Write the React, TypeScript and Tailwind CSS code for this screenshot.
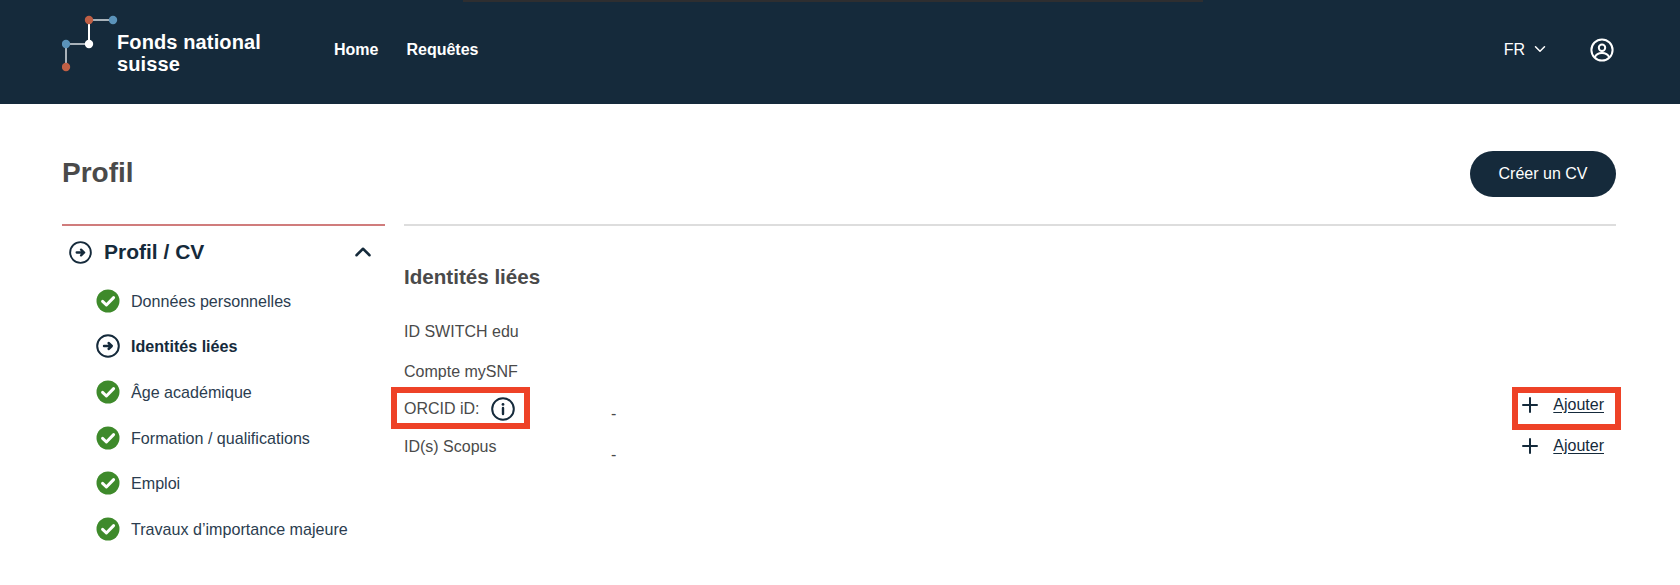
import { ChevronDown, ChevronUp, Plus } from "lucide-react"

const navy = "#152a3b"

const ArrowCircle = ({ size }: { size: number }) => (
  <svg width={size} height={size} viewBox="0 0 24 24" fill="none" stroke={navy} className="shrink-0">
    <circle cx="12" cy="12" r="10.8" strokeWidth="2" />
    <path d="M8 12h7.5M12.6 9l3.2 3-3.2 3" strokeWidth="2.4" strokeLinecap="round" strokeLinejoin="round" />
  </svg>
)

const CheckCircle = () => (
  <svg width="24" height="24" viewBox="0 0 24 24" className="shrink-0">
    <circle cx="12" cy="12" r="11.5" fill="#3e8a2b" />
    <path d="M6.6 12.4 10.4 16 17.6 8.6" fill="none" stroke="#fff" strokeWidth="3" strokeLinecap="round" strokeLinejoin="round" />
  </svg>
)

const Logo = () => (
  <svg width="64" height="64" viewBox="0 0 64 64" className="shrink-0">
    <path d="M27 10h24" stroke="#a9b2b9" strokeWidth="2" />
    <path d="M27 10v24" stroke="#fff" strokeWidth="2" />
    <path d="M4 34h23" stroke="#a9b2b9" strokeWidth="2" />
    <path d="M4 34v23" stroke="#a9b2b9" strokeWidth="2" />
    <circle cx="27" cy="10" r="4.2" fill="#bf5f45" />
    <circle cx="51" cy="10" r="4.2" fill="#5b93ba" />
    <circle cx="4" cy="34" r="4.2" fill="#5b93ba" />
    <circle cx="27" cy="34" r="4.2" fill="#fff" />
    <circle cx="4" cy="57" r="4.2" fill="#bf5f45" />
  </svg>
)

const UserIcon = () => (
  <svg width="24" height="24" viewBox="0 0 24 24" fill="none" stroke="#fff" strokeWidth="2">
    <circle cx="12" cy="12" r="10.6" />
    <circle cx="12" cy="9.8" r="3.2" />
    <path d="M4.8 19.5c1.2-3 4-4.4 7.2-4.4s6 1.4 7.2 4.4" />
  </svg>
)

const menuItems = [
  { label: "Données personnelles", done: true },
  { label: "Identités liées", done: false },
  { label: "Âge académique", done: true },
  { label: "Formation / qualifications", done: true },
  { label: "Emploi", done: true },
  { label: "Travaux d’importance majeure", done: true },
]

const AddLink = () => (
  <a className="flex items-center gap-[11px] text-[16px] text-[#152a3b] underline underline-offset-2">
    <Plus size={24} strokeWidth={2} color={navy} className="shrink-0" />
    Ajouter
  </a>
)

const App = () => {
  return (
    <div className="relative h-[585px] overflow-hidden bg-white font-['Liberation_Sans',Arial,sans-serif]">
      <div className="absolute left-[463px] top-0 h-[2px] w-[740px] bg-[#2e2e30]" />

      <header className="flex h-[104px] items-center bg-[#152a3b] pl-[62px] pr-[64px] text-white">
        <div className="flex w-[272px] items-center">
          <div className="-mt-[20px] w-[55px]">
            <Logo />
          </div>
          <div className="mt-[3px] text-[20px] font-bold leading-[21.5px] tracking-[0.12px]">
            Fonds national
            <br />
            suisse
          </div>
        </div>
        <nav className="-mt-[4px] flex items-center gap-[28px] text-[16px] font-bold">
          <span>Home</span>
          <span>Requêtes</span>
        </nav>
        <div className="ml-auto -mt-[4px] flex items-center">
          <span className="flex items-center gap-[6px] text-[16px]">
            FR
            <ChevronDown size={18} strokeWidth={2} className="-mt-[3px]" />
          </span>
          <span className="ml-[41px] mr-[2px]">
            <UserIcon />
          </span>
        </div>
      </header>

      <main className="pl-[62px] pr-[64px]">
        <div className="mt-[46px] flex h-[46px] items-center justify-between">
          <h1 className="text-[28px] font-bold text-[#4a4a4a]">Profil</h1>
          <button className="mt-[1px] h-[46px] w-[146px] rounded-full bg-[#152a3b] text-[16px] text-white">Créer un CV</button>
        </div>

        <div className="mt-[28px] flex gap-[19px]">
          <aside className="w-[323px] shrink-0 border-t-2 border-[#d07c7c]">
            <div className="flex h-[52px] items-center pl-[7px] pr-[9px]">
              <ArrowCircle size={23} />
              <span className="ml-[12px] text-[21px] font-bold text-[#152a3b]">Profil / CV</span>
              <ChevronUp size={26} strokeWidth={2.3} color={navy} className="ml-auto" />
            </div>
            <ul className="pl-[34px]">
              {menuItems.map((item) => (
                <li key={item.label} className="flex h-[45.6px] items-center gap-[11px] text-[16.1px] text-[#2b3d4f]">
                  {item.done ? <CheckCircle /> : <ArrowCircle size={24} />}
                  <span className={item.done ? "" : "font-bold text-[#152a3b]"}>{item.label}</span>
                </li>
              ))}
            </ul>
          </aside>

          <section className="flex-1">
            <div className="h-[2px] bg-[#dddddd]" />
            <h2 className="mt-[39px] text-[20.6px] font-bold leading-[24px] text-[#4a4a4a]">Identités liées</h2>
            <div className="mt-[31px] text-[16px] text-[#4a4a4a]">
              <div className="mb-[16px] flex h-[24px] items-center">ID SWITCH edu</div>
              <div className="mb-[13px] flex h-[24px] items-center">Compte mySNF</div>
              <div className="mb-[14px] flex h-[24px] items-center">
                <div className="relative flex w-[207px] items-center gap-[11px]">
                  ORCID iD:
                  <svg width="24" height="24" viewBox="0 0 24 24" fill="none" stroke={navy} strokeWidth="2">
                    <circle cx="12" cy="12" r="10.8" />
                    <path d="M12 11v6" strokeWidth="2.4" strokeLinecap="round" />
                    <circle cx="12" cy="7.4" r="1.4" fill={navy} stroke="none" />
                  </svg>
                  <div className="absolute -left-[13px] -top-[10px] h-[42px] w-[139px] border-[6px] border-[#ee4227]" />
                </div>
                <span className="mt-[10px]">-</span>
                <div className="relative ml-auto -mt-[8px] mr-[12px]">
                  <AddLink />
                  <div className="absolute -left-[6px] -right-[17px] -top-[6px] h-[43px] border-[6px] border-[#ee4227]" />
                </div>
              </div>
              <div className="flex h-[24px] items-center">
                <div className="w-[207px]">ID(s) Scopus</div>
                <span className="mt-[16px]">-</span>
                <div className="ml-auto -mt-[2px] mr-[12px]">
                  <AddLink />
                </div>
              </div>
            </div>
          </section>
        </div>
      </main>
    </div>
  )
}

export default App
